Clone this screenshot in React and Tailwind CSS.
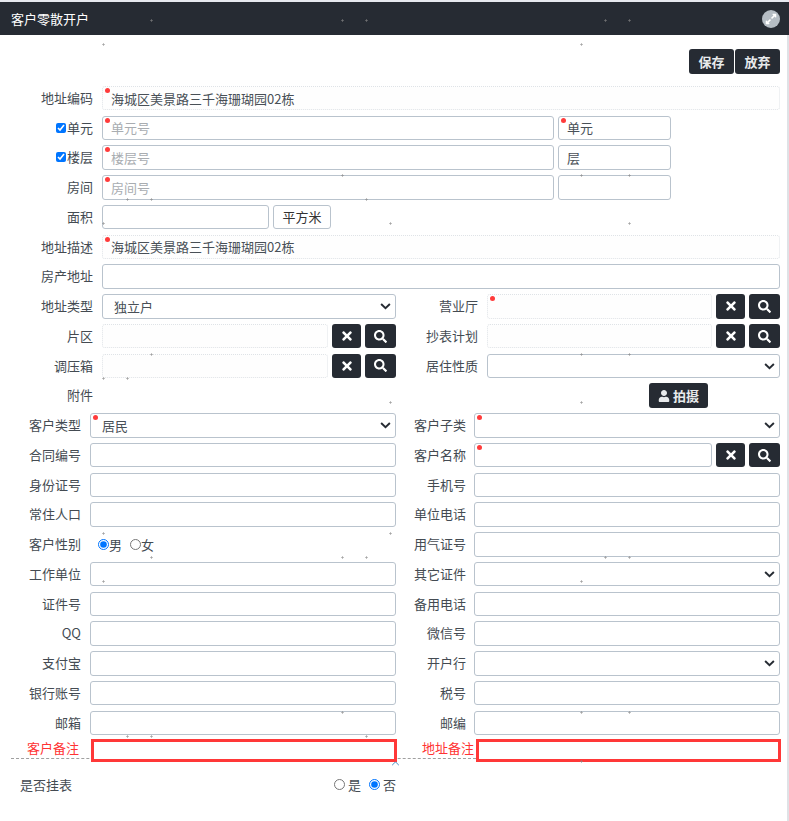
import React from "react";
import { FaTimes, FaSearch, FaUser, FaExpandAlt } from "react-icons/fa";

const specks = [
  [151,20],[342,20],[366,20],[605,20],[629,20],[103,44],[581,44],
  [342,175],[581,175],[629,175],[127,199],[151,199],[366,199],
  [103,223],[390,223],[629,223],[151,354],[581,354],[629,354],
  [103,378],[127,378],[390,402],[581,402],[103,533],[390,533],
  [151,557],[342,557],[366,557],[605,557],[629,557],[103,581],[581,581],
  [342,712],[581,712],[629,712],[127,736],[151,736],[366,736],[581,761],
];

function Dot() {
  return <span className="absolute left-[3px] top-[2px] w-[5px] h-[5px] rounded-full bg-[#ff3b3b]" />;
}

function Label({ w, red, children }) {
  return (
    <div className={`shrink-0 text-right ${w} ${red ? "text-[#ff3333] leading-[18px]" : "text-[#444b52] leading-[24px]"}`}>
      {children}
    </div>
  );
}

function Input({ value, placeholder, dot, dotted, className = "flex-1" }) {
  return (
    <div className={`relative h-full ${className}`}>
      <input
        readOnly
        value={value ?? ""}
        placeholder={placeholder}
        className={`block w-full h-full min-w-0 rounded-[3px] px-[8px] text-[13px] text-[#495057] placeholder:text-[#a9adb1] outline-none ${
          dotted ? "border border-dotted border-[#dfe3e7] bg-[#fefefe]" : "border border-[#b9c3cd] bg-white"
        }`}
      />
      {dot && <Dot />}
    </div>
  );
}

function Select({ value, dot, className = "flex-1" }) {
  return (
    <div className={`relative h-full ${className}`}>
      <select
        defaultValue={value ?? ""}
        className="block w-full h-full appearance-none rounded-[3px] border border-[#b9c3cd] bg-white pl-[11px] pr-6 text-[13px] text-[#495057] outline-none"
      >
        <option value={value ?? ""}>{value ?? ""}</option>
      </select>
      {dot && <Dot />}
      <svg viewBox="0 0 12 8" className="absolute right-[5px] top-[9px] w-[11px] h-[7px] pointer-events-none" fill="none" stroke="#262b33" strokeWidth="2.2">
        <path d="M1 1.2 6 6l5-4.8" />
      </svg>
    </div>
  );
}

function IconBtn({ w, children }) {
  return (
    <button className={`shrink-0 h-full ${w} rounded-[3px] bg-[#262b33] text-white flex items-center justify-center`}>
      {children}
    </button>
  );
}

function PickButtons() {
  return (
    <div className="flex h-full gap-[4px] ml-[4px]">
      <IconBtn w="w-[29px]"><FaTimes className="text-[14px]" /></IconBtn>
      <IconBtn w="w-[31px]"><FaSearch className="text-[13px]" /></IconBtn>
    </div>
  );
}

function Row({ children }) {
  return <div className="flex h-[24.5px] items-stretch">{children}</div>;
}

function Wide({ label, children }) {
  return (
    <Row>
      <Label w="w-[93px]">{label}</Label>
      <div className="flex flex-1 h-full ml-[9px]">{children}</div>
    </Row>
  );
}

function Split({ l, left, r, right, lw = "w-[93px]", lm = "ml-[9px]", rw = "w-[82px]", rm = "ml-[9px]" }) {
  return (
    <Row>
      <div className="flex w-[396px] h-full">
        <Label w={lw}>{l}</Label>
        <div className={`flex flex-1 h-full min-w-0 ${lm}`}>{left}</div>
      </div>
      <div className="flex flex-1 h-full min-w-0">
        <Label w={rw}>{r}</Label>
        <div className={`flex flex-1 h-full min-w-0 ${rm}`}>{right}</div>
      </div>
    </Row>
  );
}

function Lower({ l, left, r, right }) {
  return <Split l={l} left={left} r={r} right={right} lw="w-[81px]" rw="w-[70px]" rm="ml-[8px]" />;
}

export default function App() {
  return (
    <div className="relative min-h-[821px] bg-white font-['Noto_Sans_CJK_SC',sans-serif] text-[13px] overflow-hidden">
      <div className="h-[2px] bg-[#e6e9ef]" />
      <header className="flex h-[33px] items-center justify-between bg-[#262b33] pl-[11px] pr-[9px] text-white">
        <span className="text-[13px]">客户零散开户</span>
        <span className="flex h-[18px] w-[18px] items-center justify-center rounded-full bg-[#b5bdc4] text-[12px] text-white">
          <FaExpandAlt />
        </span>
      </header>

      <div className="flex">
        <main className="w-[780px] shrink-0">
          <div className="flex justify-end gap-px pt-[14px] h-[50.8px]">
            <button className="h-[25px] w-[45px] rounded-[3px] bg-[#262b33] font-bold text-[#e8eaec]">保存</button>
            <button className="h-[25px] w-[45px] rounded-[3px] bg-[#262b33] font-bold text-[#e8eaec]">放弃</button>
          </div>

          <div className="flex flex-col gap-[5.25px]">
            <Wide label="地址编码"><Input dotted dot value="海城区美景路三千海珊瑚园02栋" /></Wide>
            <Row>
              <Label w="w-[93px]"><span className="inline-flex items-center gap-px"><input type="checkbox" readOnly checked className="m-0 w-[10px] h-[10px]" />单元</span></Label>
              <div className="flex flex-1 h-full ml-[9px] gap-[4px]">
                <Input dot placeholder="单元号" />
                <Input dot value="单元" className="w-[113px] shrink-0" />
                <div className="w-[105px] shrink-0" />
              </div>
            </Row>
            <Row>
              <Label w="w-[93px]"><span className="inline-flex items-center gap-px"><input type="checkbox" readOnly checked className="m-0 w-[10px] h-[10px]" />楼层</span></Label>
              <div className="flex flex-1 h-full ml-[9px] gap-[4px]">
                <Input dot placeholder="楼层号" />
                <Input value="层" className="w-[113px] shrink-0" />
                <div className="w-[105px] shrink-0" />
              </div>
            </Row>
            <Row>
              <Label w="w-[93px]">房间</Label>
              <div className="flex flex-1 h-full ml-[9px] gap-[4px]">
                <Input dot placeholder="房间号" />
                <Input className="w-[113px] shrink-0" />
                <div className="w-[105px] shrink-0" />
              </div>
            </Row>
            <Row>
              <Label w="w-[93px]">面积</Label>
              <div className="flex flex-1 h-full ml-[9px] gap-[4px]">
                <Input className="w-[167px] shrink-0" />
                <button className="w-[58px] rounded-[3px] border border-[#b9c3cd] bg-white text-[#333]">平方米</button>
              </div>
            </Row>
            <Wide label="地址描述"><Input dotted dot value="海城区美景路三千海珊瑚园02栋" /></Wide>
            <Wide label="房产地址"><Input /></Wide>
            <Split l="地址类型" left={<Select value="独立户" />} r="营业厅" right={<><Input dotted dot /><PickButtons /></>} />
            <Split l="片区" left={<><Input dotted /><PickButtons /></>} r="抄表计划" right={<><Input dotted /><PickButtons /></>} />
            <Split l="调压箱" left={<><Input dotted /><PickButtons /></>} r="居住性质" right={<Select />} />
            <Row>
              <Label w="w-[93px]">附件</Label>
              <div className="flex flex-1 justify-end pr-[72px]">
                <button className="flex h-full w-[59px] items-center justify-center gap-[3px] rounded-[3px] bg-[#262b33] font-bold text-[#e8eaec]">
                  <FaUser className="text-[12px]" />拍摄
                </button>
              </div>
            </Row>
            <Lower l="客户类型" left={<Select dot value="居民" />} r="客户子类" right={<Select dot />} />
            <Lower l="合同编号" left={<Input />} r="客户名称" right={<><Input dot /><PickButtons /></>} />
            <Lower l="身份证号" left={<Input />} r="手机号" right={<Input />} />
            <Lower l="常住人口" left={<Input />} r="单位电话" right={<Input />} />
            <Lower
              l="客户性别"
              left={
                <div className="flex items-center pl-[8px] text-[#444b52]">
                  <input type="radio" name="sex" defaultChecked className="m-0 w-[11px] h-[11px]" />
                  <span>男</span>
                  <input type="radio" name="sex" className="m-0 ml-[8px] w-[11px] h-[11px]" />
                  <span>女</span>
                </div>
              }
              r="用气证号"
              right={<Input />}
            />
            <Lower l="工作单位" left={<Input />} r="其它证件" right={<Select />} />
            <Lower l="证件号" left={<Input />} r="备用电话" right={<Input />} />
            <Lower l="QQ" left={<Input />} r="微信号" right={<Input />} />
            <Lower l="支付宝" left={<Input />} r="开户行" right={<Select />} />
            <Lower l="银行账号" left={<Input />} r="税号" right={<Input />} />
            <Lower l="邮箱" left={<Input />} r="邮编" right={<Input />} />
          </div>

          <div className="relative flex h-[23px] mt-[3.5px]">
            <div className="absolute left-[11px] top-[19px] w-[465px] border-t border-dashed border-[#a0a0a0]" />
            <div className="relative flex w-[397px] h-full">
              <Label w="w-[79px]" red>客户备注</Label>
              <div className="ml-[12px] w-[306px] h-full border-[3px] border-[#ff3838] bg-white" />
            </div>
            <div className="relative flex flex-1 h-full">
              <Label w="w-[77px]" red>地址备注</Label>
              <div className="ml-[2px] w-[305px] h-full border-[3px] border-[#ff3838] bg-white" />
            </div>
            <svg viewBox="0 0 10 6" className="absolute left-[391px] top-[22px] w-[9px] h-[5px]" fill="none" stroke="#4a90c2" strokeWidth="1.2">
              <path d="M1 5 5 1l4 4" />
            </svg>
          </div>

          <div className="mt-[11px] flex h-[24px] w-[396px] items-center text-[#444b52]">
            <span className="pl-[20px]">是否挂表</span>
            <div className="ml-auto flex items-center">
              <input type="radio" name="meter" className="m-0 w-[11px] h-[11px]" />
              <span className="ml-[3px]">是</span>
              <input type="radio" name="meter" defaultChecked className="m-0 ml-[8px] w-[11px] h-[11px]" />
              <span className="ml-[3px]">否</span>
            </div>
          </div>
        </main>
        <div className="ml-auto w-[2px] self-stretch min-h-[786px] bg-[#dfe2e6]" />
      </div>

      <svg className="absolute inset-0 w-full h-full pointer-events-none" fill="none" stroke="#888" strokeOpacity="0.5" strokeWidth="1">
        {specks.map(([x, y]) => (
          <path key={`${x}-${y}`} d={`M${x - 1} ${y + 0.5}h3M${x + 0.5} ${y - 1}v3`} />
        ))}
      </svg>
    </div>
  );
}
